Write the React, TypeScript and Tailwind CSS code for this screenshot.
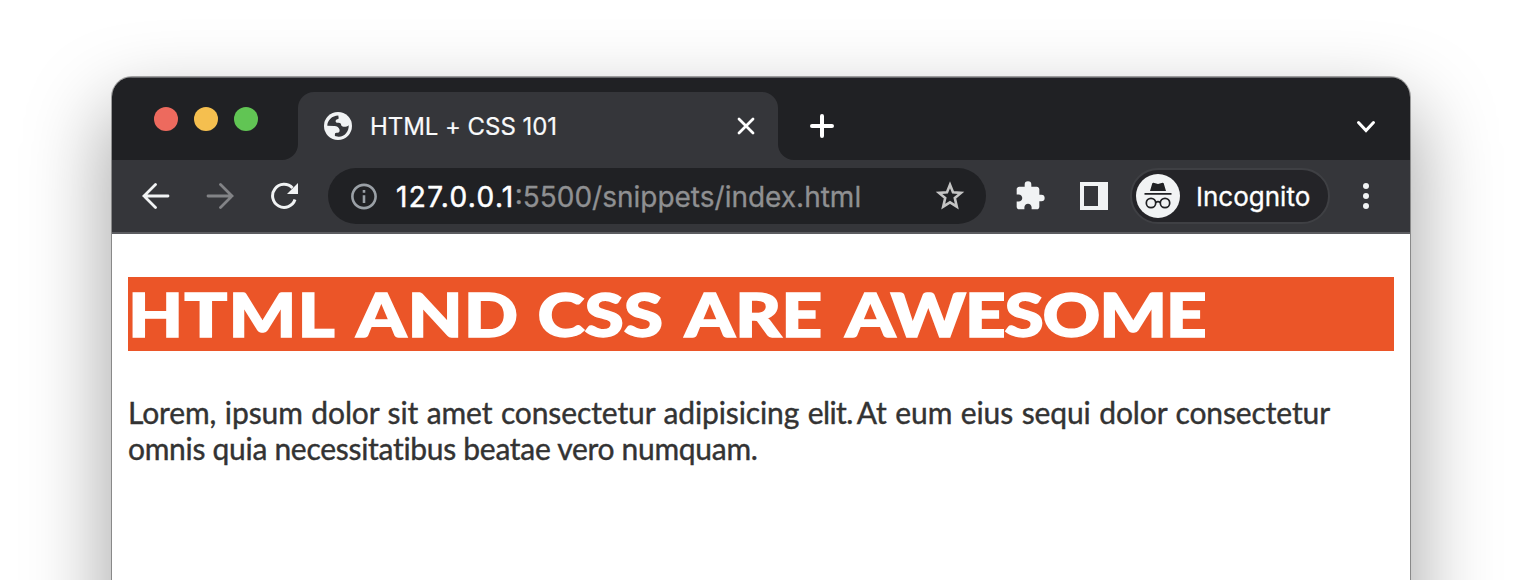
import { MdExtension, MdInfoOutline } from "react-icons/md";

function TrafficLights() {
  return (
    <div className="flex w-[186px] gap-4 pt-[30px] pl-[42px]">
      <div className="size-6 rounded-full bg-[#ed6a5e]" />
      <div className="size-6 rounded-full bg-[#f5bf4f]" />
      <div className="size-6 rounded-full bg-[#61c554]" />
    </div>
  );
}

function GlobeIcon() {
  return (
    <svg className="size-7" viewBox="0 0 28 28">
      <circle cx="14" cy="14" r="14" fill="#f1f3f4" />
      <path
        d="M3.300 13.800C3.300 8.200 8 3.500 14.300 3.400L14.700 6.200C14.500 7.500 12 7 11.600 8.800C11.500 10.500 12.500 11 14.500 10.800C16.800 10.800 17 12 17.300 13.600C18.500 15.300 22.500 15.300 24.700 13.200C25 19.500 20.500 25 14.500 24.700L10.900 24V22C11 21 12 20.800 13.500 20.800C15.500 20.600 15.800 19.500 15.500 17.600C15 15.500 13 14.200 10.500 14Z"
        fill="#35363a"
      />
    </svg>
  );
}

function Tab() {
  return (
    <div className="mt-[15px] flex h-[68px] w-[480px] items-center rounded-t-[16px] bg-[#35363a] pl-[26px] pr-[23px]">
      <GlobeIcon />
      <span className="ml-[18px] pt-px text-2xl tracking-[-0.05px] text-[#f9fafb] [-webkit-text-stroke:0.2px]">HTML + CSS 101</span>
      <svg className="ml-auto size-[18px]" viewBox="0 0 18 18" stroke="#fff" strokeWidth="2.800" strokeLinecap="round">
        <path d="M2 2 16 16M16 2 2 16" />
      </svg>
    </div>
  );
}

function TabFoot({ d }: { d: string }) {
  return (
    <svg className="size-4 self-end" viewBox="0 0 16 16" fill="#35363a">
      <path d={d} />
    </svg>
  );
}

function StarIcon() {
  return (
    <svg className="ml-auto size-9 shrink-0" viewBox="0 0 36 36" fill="none" stroke="#c4c4c4" strokeWidth="2.600">
      <path d="M18 6.800 21 14.300 29 14.900 22.800 20.100 24.800 28.600 18 24.300 11.200 28.600 13.200 20.100 7 14.900 15 14.300Z" />
    </svg>
  );
}

function IncognitoIcon() {
  return (
    <svg className="size-11" viewBox="0 0 44 44">
      <circle cx="22" cy="22" r="22" fill="#f1f3f4" />
      <path d="M17.500 8.700 22 10l4.500-1.300c.6-.1 1 .1 1.200.6L30 17H14l2.300-7.700c.2-.5.6-.7 1.200-.6Z" fill="#202124" />
      <path d="M8.500 19.800h27" stroke="#202124" strokeWidth="1.800" />
      <g fill="none" stroke="#202124" strokeWidth="1.700">
        <circle cx="15" cy="29" r="4.700" />
        <circle cx="29" cy="29" r="4.700" />
        <path d="M19.700 28.500q2.300-1.600 4.600 0" />
      </g>
    </svg>
  );
}

function Toolbar() {
  return (
    <div className="flex h-[74px] items-center border-b-2 border-[#5c5d61] bg-[#35363a] pl-[30px]">
      <svg className="h-[26px] w-7" viewBox="0 0 28 26" fill="none" stroke="#f1f3f4" strokeWidth="2.800" strokeLinecap="round">
        <path d="M26 13H2M13.500 1.500 2 13l11.500 11.500" />
      </svg>
      <svg className="ml-9 h-[26px] w-7" viewBox="0 0 28 26" fill="none" stroke="#828386" strokeWidth="2.800" strokeLinecap="round">
        <path d="M2 13h24M14.500 1.500 26 13 14.500 24.500" />
      </svg>
      <svg className="ml-9 size-7" viewBox="0 0 28 28">
        <path d="M25 17.500A11.500 11.500 0 1 1 22.500 6" fill="none" stroke="#f1f3f4" strokeWidth="3" />
        <path d="M28 1v11H17Z" fill="#f1f3f4" />
      </svg>
      <div className="ml-[30px] flex h-14 w-[658px] items-center rounded-full bg-[#202124] pl-5 pr-[18px]">
        <MdInfoOutline className="size-8 pt-px text-[#9aa0a6]" />
        <span className="ml-4 pt-px text-[28px] whitespace-nowrap text-[#8f9092] [-webkit-text-stroke:0.3px]">
          <span className="tracking-[1.35px] text-white [-webkit-text-stroke:0.5px]">127.0.0.1</span>:5500/snippets/index.html
        </span>
        <StarIcon />
      </div>
      <MdExtension className="ml-7 size-8 text-[#f1f3f4]" />
      <div className="ml-[34px] h-7 w-7 border-4 border-r-[10px] border-[#f1f3f4] bg-[#35363a]" />
      <div className="ml-[22px] flex h-14 w-[200px] items-center rounded-full border-2 border-[#3f4044] bg-[#242428] pl-1">
        <IncognitoIcon />
        <span className="ml-4 pt-px text-[26px] text-white [-webkit-text-stroke:0.3px]">Incognito</span>
      </div>
      <div className="ml-[33px] flex flex-col gap-1">
        <div className="size-1.5 rounded-full bg-[#f1f3f4]" />
        <div className="size-1.5 rounded-full bg-[#f1f3f4]" />
        <div className="size-1.5 rounded-full bg-[#f1f3f4]" />
      </div>
    </div>
  );
}

export default function App() {
  return (
    <div className="h-[580px] w-full overflow-hidden bg-white px-28 pt-[77px] font-['Inter',sans-serif]">
      <div className="h-[1000px] w-[1298px] overflow-hidden rounded-[20px] bg-white shadow-[0_0_0_1px_#00000055,0_36px_80px_6px_#00000059]">
        <div className="flex h-[83px] bg-[#202124] shadow-[inset_0_1px_0_#66676a]">
          <div className="flex w-[170px]"><TrafficLights /></div>
          <TabFoot d="M16 0V16H0A16 16 0 0 0 16 0Z" />
          <Tab />
          <TabFoot d="M0 0V16H16A16 16 0 0 1 0 0Z" />
          <svg className="mt-[37px] ml-4 size-6" viewBox="0 0 24 24" stroke="#fff" strokeWidth="4" strokeLinecap="round">
            <path d="M12 2v20M2 12h20" />
          </svg>
          <svg className="mt-[42px] mr-[34px] ml-auto h-4 w-5" viewBox="0 0 20 16" fill="none" stroke="#fff" strokeWidth="3" strokeLinecap="round">
            <path d="m2.500 3.500 7.500 8 7.500-8" />
          </svg>
        </div>
        <Toolbar />
        <main className="px-4 pt-[43px] font-['Lato',sans-serif]">
          <h1 className="h-[74px] bg-[#eb5528] text-[61px] leading-[73px] font-black whitespace-nowrap text-white">
            <span className="inline-block origin-left scale-x-[1.171] [word-spacing:6px] [-webkit-text-stroke:1.4px]">
              <span className="tracking-[0.9px]">HTML AND</span> <span className="-ml-[5px]">CSS ARE</span>{" "}
              <span className="-ml-px tracking-[-1.1px]">AWESOME</span>
            </span>
          </h1>
          <p className="mt-[43px] text-[30px] leading-9 whitespace-nowrap text-[#333] [font-variant-ligatures:none] [-webkit-text-stroke:0.4px]">
            <span className="tracking-[-0.11px] [word-spacing:1px]">
              Lorem, ipsum dolor sit amet consectetur adipisicing <span className="tracking-[-0.6px]">elit. </span>
              <span className="-ml-1">At eum eius sequi dolor consectetur</span>
            </span>
            <br />
            <span className="tracking-[-0.29px]">omnis quia necessitatibus beatae vero numquam.</span>
          </p>
        </main>
      </div>
    </div>
  );
}
